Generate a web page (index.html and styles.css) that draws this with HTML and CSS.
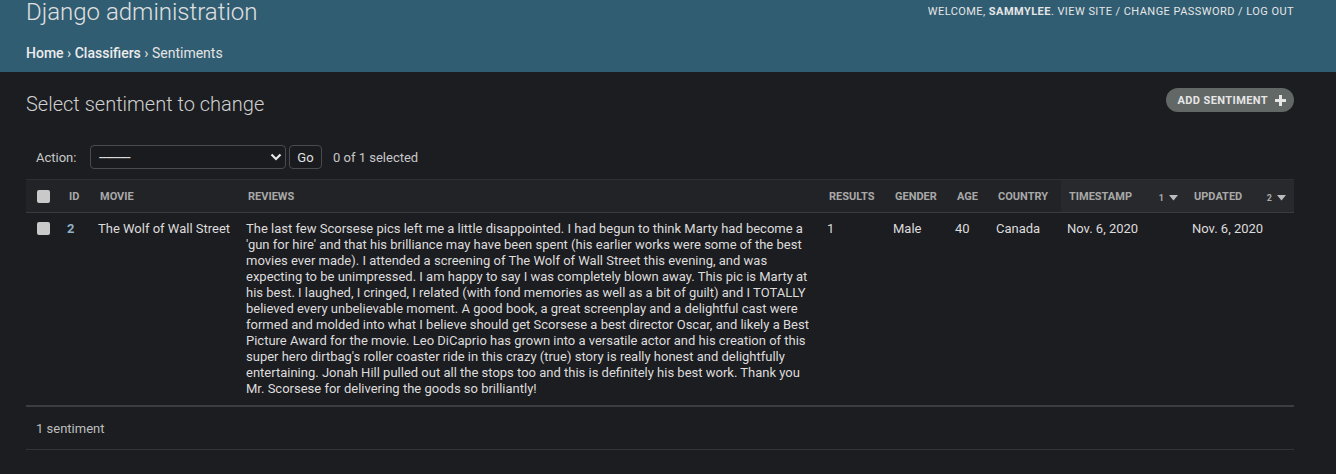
FILE: index.html
```html
<!DOCTYPE html>
<html>
<head>
<meta charset="utf-8">
<link rel="stylesheet" href="styles.css">
</head>
<body>
<header class="header">
  <div class="header-top">
    <h1 class="branding">Django administration</h1>
    <div class="user-tools">WELCOME, <strong>SAMMYLEE</strong>. <a>VIEW SITE</a> / <a>CHANGE PASSWORD</a> / <a>LOG OUT</a></div>
  </div>
  <nav class="breadcrumbs"><a>Home</a> › <a>Classifiers</a> › Sentiments</nav>
</header>
<main class="content">
  <div class="title-row">
    <h2 class="page-title">Select sentiment to change</h2>
    <a class="addlink">ADD SENTIMENT
      <svg width="11" height="11" viewBox="0 0 11 11"><path d="M4 0h3v4h4v3H7v4H4V7H0V4h4z" fill="#e6e6e6"/></svg>
    </a>
  </div>
  <div class="actions">
    <span class="action-label">Action:</span>
    <div class="select"><span class="dashes">---------</span>
      <svg width="12" height="8" viewBox="0 0 12 8"><path d="M1.5 1.5 6 6l4.5-4.5" stroke="#e8e8e8" stroke-width="2.2" fill="none"/></svg>
    </div>
    <button class="go">Go</button>
    <span class="counter">0 of 1 selected</span>
  </div>
  <table class="results">
    <colgroup>
      <col style="width:35px"><col style="width:31px"><col style="width:148px"><col style="width:581px"><col style="width:66px"><col style="width:62px"><col style="width:41px"><col style="width:71px"><col style="width:125px"><col style="width:108px">
    </colgroup>
    <thead>
      <tr>
        <th><span class="cb"></span></th>
        <th>ID</th>
        <th>MOVIE</th>
        <th>REVIEWS</th>
        <th>RESULTS</th>
        <th>GENDER</th>
        <th>AGE</th>
        <th>COUNTRY</th>
        <th class="sorted"><div class="sortcell"><span>TIMESTAMP</span><span class="sortnum">1 <svg width="9" height="6" viewBox="0 0 9 6"><path d="M0 0h9L4.5 5.5z" fill="#bbb"/></svg></span></div></th>
        <th class="sorted"><div class="sortcell"><span>UPDATED</span><span class="sortnum">2 <svg width="9" height="6" viewBox="0 0 9 6"><path d="M0 0h9L4.5 5.5z" fill="#bbb"/></svg></span></div></th>
      </tr>
    </thead>
    <tbody>
      <tr>
        <td><span class="cb"></span></td>
        <td class="shift"><a class="idlink">2</a></td>
        <td class="shift nowrap">The Wolf of Wall Street</td>
        <td class="shift">The last few Scorsese pics left me a little disappointed. I had begun to think Marty had become a 'gun for hire' and that his brilliance may have been spent (his earlier works were some of the best movies ever made). I attended a screening of The Wolf of Wall Street this evening, and was expecting to be unimpressed. I am happy to say I was completely blown away. This pic is Marty at his best. I laughed, I cringed, I related (with fond memories as well as a bit of guilt) and I TOTALLY believed every unbelievable moment. A good book, a great screenplay and a delightful cast were formed and molded into what I believe should get Scorsese a best director Oscar, and likely a Best Picture Award for the movie. Leo DiCaprio has grown into a versatile actor and his creation of this super hero dirtbag's roller coaster ride in this crazy (true) story is really honest and delightfully entertaining. Jonah Hill pulled out all the stops too and this is definitely his best work. Thank you Mr. Scorsese for delivering the goods so brilliantly!</td>
        <td class="shift">1</td>
        <td class="shift">Male</td>
        <td class="shift">40</td>
        <td class="shift">Canada</td>
        <td class="shift">Nov. 6, 2020</td>
        <td class="shift">Nov. 6, 2020</td>
      </tr>
    </tbody>
  </table>
  <p class="paginator">1 sentiment</p>
</main>
</body>
</html>
```
FILE: styles.css
```css
* { box-sizing: border-box; }
html, body {
  margin: 0;
  padding: 0;
  background: #1c1d21;
  color: #d8d8d8;
  font-family: Roboto, "Liberation Sans", sans-serif;
  overflow: hidden;
}
a { color: inherit; text-decoration: none; }

.header {
  background: #305d72;
  height: 72px;
  padding: 0 42px 0 26px;
  color: #e6e6e6;
}
.header-top {
  display: flex;
  justify-content: space-between;
  align-items: flex-start;
  height: 40px;
}
.branding {
  margin: -2px 0 0 0;
  font-size: 24px;
  font-weight: 300;
  color: #e0e0e0;
  line-height: 28px;
}
.user-tools {
  font-size: 11px;
  letter-spacing: 0.45px;
  padding-top: 5px;
  color: #e6e6e6;
}
.user-tools strong { font-weight: 700; }
.breadcrumbs {
  font-size: 14px;
  color: #e4e4e4;
  line-height: 18px;
  padding-top: 4px;
}
.breadcrumbs a { font-weight: 500; color: #ececec; }

.content {
  padding: 0 42px 0 26px;
}
.title-row {
  display: flex;
  justify-content: space-between;
  align-items: flex-start;
  padding-top: 16px;
}
.page-title {
  margin: 2px 0 0 0;
  font-size: 20px;
  font-weight: 300;
  line-height: 28px;
  color: #d0d0d0;
}
.addlink {
  display: flex;
  align-items: center;
  gap: 7px;
  height: 24px;
  padding: 0 8px 0 12px;
  border-radius: 12px;
  background: #626866;
  color: #e6e6e6;
  font-size: 11px;
  font-weight: 700;
  letter-spacing: 0.4px;
}

.actions {
  display: flex;
  align-items: center;
  margin-top: 27px;
  height: 24px;
  padding-left: 10px;
  font-size: 13px;
  color: #c8c8c8;
}
.action-label { width: 54px; }
.select {
  width: 196px;
  height: 24px;
  border: 1px solid #4a4b4f;
  border-radius: 4px;
  background: #1a1b1e;
  display: flex;
  align-items: center;
  justify-content: space-between;
  padding: 0 3px 0 8px;
  color: #e0e0e0;
}
.dashes {
  font-size: 15px;
  letter-spacing: -0.7px;
}
.go {
  margin-left: 3px;
  width: 33px;
  height: 24px;
  border: 1px solid #4a4b4f;
  border-radius: 4px;
  background: #1a1b1e;
  color: #e0e0e0;
  font-family: inherit;
  font-size: 13px;
  padding: 0;
}
.counter { margin-left: 11px; }

.results {
  margin-top: 10px;
  width: 1268px;
  border-collapse: collapse;
  table-layout: fixed;
  font-size: 13px;
}
.results thead th {
  background: #222327;
  border-top: 1px solid #2e2f33;
  border-bottom: 1px solid #3a3b3f;
  height: 33px;
  padding: 0 8px;
  font-size: 11px;
  font-weight: 700;
  color: #a9a9a9;
  text-align: left;
  vertical-align: middle;
  white-space: nowrap;
}
.results thead th.sorted { background: #28292d; }
.sortcell {
  display: flex;
  justify-content: space-between;
  align-items: center;
}
.sortnum {
  display: flex;
  align-items: center;
  gap: 5px;
  font-size: 9px;
  padding-top: 4px;
  color: #aaa;
}
.results tbody td {
  padding: 8px 8px 8px;
  line-height: 16px;
  vertical-align: top;
  color: #dcdcdc;
  border-bottom: 2px solid #3c3d41;
}
.results tbody td.shift { padding-left: 6px; padding-right: 10px; }
.nowrap { white-space: nowrap; }
.cb {
  display: block;
  width: 13px;
  height: 13px;
  border-radius: 2px;
  background: #c9c9c9;
  margin-left: 3px;
}
.results tbody td .cb { margin-top: 1px; }
.idlink { color: #8fb1c7; font-weight: 700; }

.paginator {
  margin: 0;
  height: 43px;
  padding: 0 10px;
  line-height: 43px;
  font-size: 13px;
  color: #bdbdbd;
  border-bottom: 1px solid #333438;
}
```
